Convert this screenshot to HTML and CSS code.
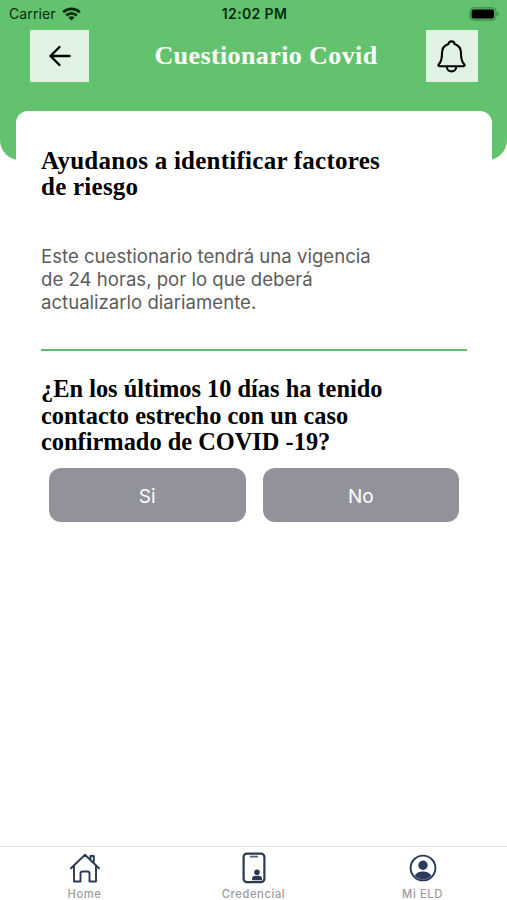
FILE: index.html
```html
<!DOCTYPE html>
<html lang="es">
<head>
<meta charset="utf-8">
<title>Cuestionario Covid</title>
<link rel="stylesheet" href="styles.css">
</head>
<body>
<div class="top">
  <div class="status">
    <div class="carrier"><span>Carrier</span>
      <svg width="19" height="14" viewBox="0 0 19 14" fill="none" stroke="#062b0c" stroke-width="2.7">
        <path d="M1.2 5.2a12 12 0 0 1 16.6 0M4.2 8.5a7.6 7.6 0 0 1 10.6 0"/>
        <path d="M9.5 13.6L6.4 10.6a4.4 4.4 0 0 1 6.2 0z" fill="#062b0c" stroke="none"/>
      </svg>
    </div>
    <div class="time">12:02 PM</div>
    <svg class="battery" width="31" height="14" viewBox="0 0 31 14">
      <rect x="0.7" y="0.7" width="26.4" height="12.6" rx="4" fill="#56a95f" stroke="#428e4b"/>
      <rect x="2.6" y="2.6" width="22.4" height="8.8" rx="2" fill="#000"/>
      <path d="M28.4 4.8q2.4 2.2 0 4.4z" fill="#33833e"/>
    </svg>
  </div>
  <div class="bar">
    <button class="back">
      <svg width="24" height="22" viewBox="0 0 24 22" fill="none" stroke="#000" stroke-width="2.4" stroke-linecap="round" stroke-linejoin="round">
        <path d="M21.5 11H2.5M11.5 2L2.5 11l9 9"/>
      </svg>
    </button>
    <h1>Cuestionario Covid</h1>
    <button class="bell">
      <svg width="29" height="33" viewBox="0 0 29 33" fill="none" stroke="#000" stroke-width="2.1" stroke-linejoin="round">
        <path d="M11.5 4a3 2.6 0 0 1 6 0C22.3 5.5 24 8.5 24 13c0 5.5.5 8.5 2.8 10.7 1.4 1.4.7 2.5-.8 2.5H3c-1.5 0-2.200-1.100-.8-2.500C4.500 21.500 5 18.500 5 13c0-4.500 1.700-7.500 6.500-9z"/>
        <path d="M9.700 26.500c.3 6.500 9.300 6.500 9.600 0"/>
      </svg>
    </button>
  </div>
</div>

<div class="card">
  <h2>Ayudanos a identificar factores<br>de riesgo</h2>
  <p class="info">Este cuestionario tendrá una vigencia<br>de 24 horas, por lo que deberá<br>actualizarlo diariamente.</p>
  <h3>¿En los últimos 10 días ha tenido<br>contacto estrecho con un caso<br>confirmado de COVID -19?</h3>
  <div class="answers">
    <button>Si</button>
    <button>No</button>
  </div>
</div>

<div class="tabs">
  <div class="tab">
    <svg width="32" height="32" viewBox="0 0 32 32" fill="none" stroke="#2b3a50" stroke-width="1.9" stroke-linejoin="round" stroke-linecap="round">
      <path d="M2 16.300L16 2.700l14 13.600M5 14v15.500h6.500v-7.800q0-2.200 2.200-2.200h4.600q2.200 0 2.200 2.200v7.800H27V14M21.500 7.300V4h3.300v6.500"/>
    </svg>
    <span>Home</span>
  </div>
  <div class="tab">
    <svg width="32" height="32" viewBox="0 0 32 32">
      <rect x="5.600" y="1.600" width="20.800" height="28.600" rx="3.500" fill="none" stroke="#2b3a50" stroke-width="2.200"/>
      <path d="M12 3.700h8v1.800h-8z" fill="#56657a"/>
      <circle cx="19" cy="20.200" r="2.800" fill="#2b3a50"/>
      <path d="M14 28.300v-1.300q0-3.300 3.500-3.300h3q3.500 0 3.500 3.300v1.300z" fill="#2b3a50"/>
    </svg>
    <span>Credencial</span>
  </div>
  <div class="tab">
    <svg width="32" height="32" viewBox="0 0 32 32">
      <circle cx="16" cy="16" r="12.400" fill="none" stroke="#2b3a5a" stroke-width="1.900"/>
      <circle cx="16" cy="13.300" r="4.700" fill="#2b3a5a"/>
      <path d="M7.800 23.600q2.400-4 8.200-4t8.200 4q-3.200 3.800-8.200 3.800t-8.200-3.800z" fill="#2b3a5a"/>
    </svg>
    <span>Mi ELD</span>
  </div>
</div>
</body>
</html>
```
FILE: styles.css
```css
*
{
box-sizing:border-box;
}
body
{
margin:0;
height:900px;
display:flex;
flex-direction:column;
background:white;
font-family:Inter,"Liberation Sans",sans-serif;
}
svg
{
display:block;
flex:none;
}
h1,h2,h3,p
{
margin:0;
white-space:nowrap;
}
button
{
border:none;
padding:0;
font-family:inherit;
}
.top
{
height:160px;
flex:none;
background:#62c26d;
border-radius:0 0 20px 20px;
}
.status
{
height:30px;
padding:0 7px 3px 9px;
display:grid;
grid-template-columns:1fr auto 1fr;
align-items:center;
font-size:14px;
color:#062b0c;
}
.carrier
{
display:flex;
align-items:center;
gap:6px;
letter-spacing:0.1px;
}
.time
{
font-weight:600;
font-size:14px;
letter-spacing:0.35px;
}
.battery
{
justify-self:end;
}
.bar
{
display:flex;
padding:0 29px 0 30px;
}
.back,.bell
{
height:52px;
display:flex;
align-items:center;
justify-content:center;
background:#e0f3e3;
}
.back
{
width:59px;
}
.bell
{
width:52px;
padding-right:2px;
}
h1
{
flex:1;
padding-left:17px;
text-align:center;
font:bold 26px/52px "Liberation Serif",serif;
letter-spacing:0.4px;
color:white;
}
.card
{
flex:1;
margin:-49px 15px 0 16px;
padding:37px 25px 0;
background:white;
border-radius:12px 12px 0 0;
}
h2,h3
{
font-family:"Liberation Serif",serif;
color:black;
}
h2
{
font-size:25px;
line-height:26px;
letter-spacing:0.25px;
}
.info
{
margin-top:45px;
padding-bottom:35px;
font-size:18.6px;
line-height:23px;
color:#5c5c5c;
border-bottom:2px solid #5fc26b;
}
h3
{
margin-top:25px;
font-size:24.4px;
line-height:26.7px;
}
.answers
{
display:flex;
gap:17px;
padding:0 8px;
margin-top:11.9px;
}
.answers button
{
flex:1;
height:54px;
padding-top:2px;
border-radius:12px;
background:#92929b;
color:white;
font-size:19px;
}
.tabs
{
height:54px;
flex:none;
display:flex;
border-top:1px solid #e3e3e5;
}
.tab
{
flex:1;
padding-top:5px;
display:flex;
flex-direction:column;
align-items:center;
font-size:11.2px;
font-weight:500;
line-height:11px;
letter-spacing:0.6px;
color:#9b9b9e;
}
.tab span
{
margin-top:5px;
}
```
